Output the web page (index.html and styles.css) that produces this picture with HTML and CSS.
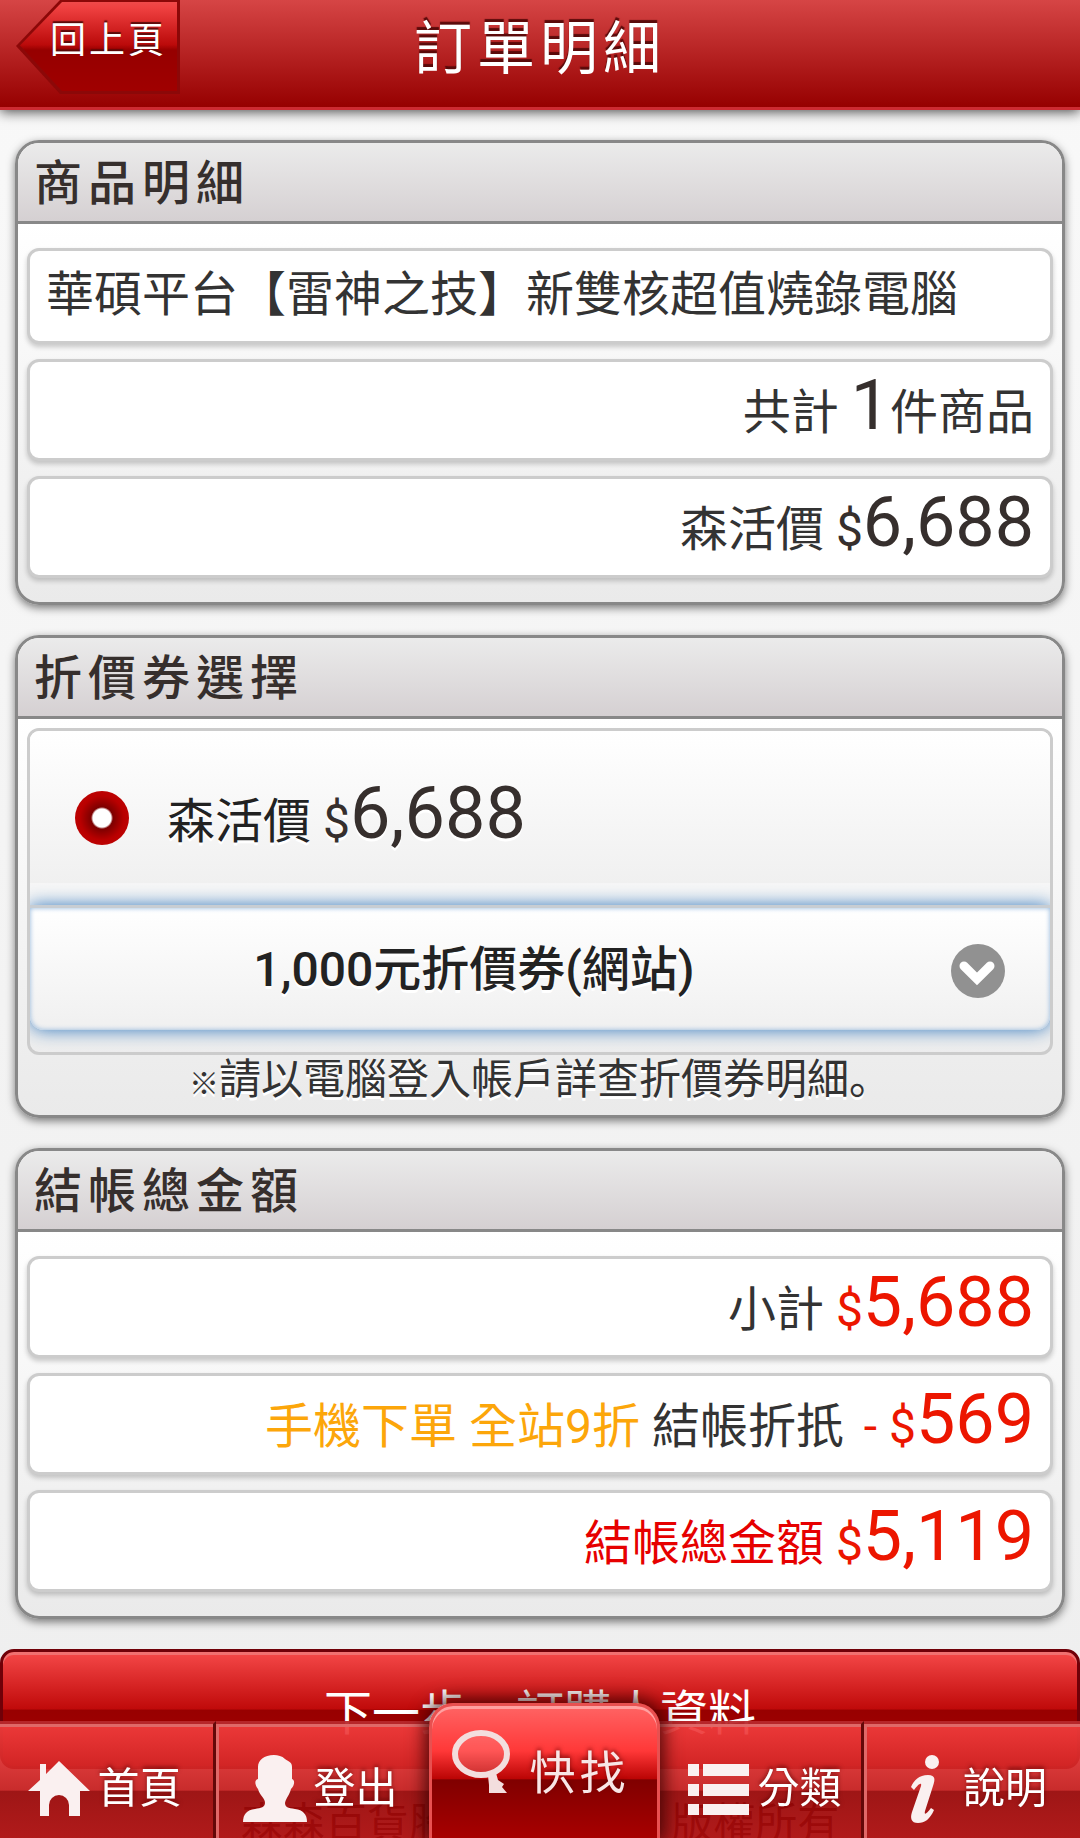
FILE: index.html
```html
<!DOCTYPE html>
<html lang="zh-Hant">
  <head>
    <meta charset="UTF-8" />
    <meta name="viewport" content="width=device-width, initial-scale=1.0" />
    <title>訂單明細</title>
    <link rel="stylesheet" href="styles.css">
  </head>
  <body>
    <div class="page">
      <header class="header">
        <a class="back" href="#"><span>回上頁</span></a>
        <h1>訂單明細</h1>
      </header>

      <main class="content">
        <section class="panel">
          <h2>商品明細</h2>
          <ul class="rows">
            <li class="row row-name">華碩平台【雷神之技】新雙核超值燒錄電腦</li>
            <li class="row">共計 <span class="num">1</span>件商品</li>
            <li class="row">森活價 <span class="price">$<span class="num">6,688</span></span></li>
          </ul>
        </section>

        <section class="panel">
          <h2>折價券選擇</h2>
          <div class="coupon">
            <label class="option" for="priceOption">
              <input type="radio" id="priceOption" name="coupon" checked>
              <span>森活價 <span class="price">$<span class="num">6,688</span></span></span>
            </label>
            <div class="select-wrap">
              <select id="couponSelect" aria-label="折價券">
                <option>1,000元折價券(網站)</option>
              </select>
              <svg class="chevron" viewBox="0 0 54 54">
                <circle cx="27" cy="27" r="27" fill="#919191"/>
                <path d="M13 22 L26 35 L39 22" fill="none" stroke="#fff" stroke-width="9" stroke-linecap="round"/>
              </svg>
            </div>
          </div>
          <p class="note"><span class="mark">※</span>請以電腦登入帳戶詳查折價券明細<span class="stop" lang="ja">。</span></p>
        </section>

        <section class="panel">
          <h2>結帳總金額</h2>
          <ul class="rows">
            <li class="row">小計 <span class="price red">$<span class="num">5,688</span></span></li>
            <li class="row"><span class="promo">手機下單 全站9折</span> 結帳折扺 <span class="price red discount">- $<span class="num">569</span></span></li>
            <li class="row"><span class="total">結帳總金額</span> <span class="price red">$<span class="num">5,119</span></span></li>
          </ul>
        </section>
      </main>

      <button type="button" class="next">下一步，訂購人資料</button>
      <footer class="footer">森森百貨股份有限公司 版權所有</footer>
    </div>

    <nav class="tabs">
      <a class="tab" href="#">
        <svg viewBox="0 0 64 68">
          <path d="M13 36 H1 L13 25 V9 H19 V19 L32 6 L63 36 H53 V61 H42 V50 A10 10 0 0 0 22 50 V61 H13 Z"/>
        </svg>
        <span>首頁</span>
      </a>
      <a class="tab" href="#">
        <svg viewBox="0 0 64 68">
          <path d="M31 0 C21 0 15 5 15 12 V24 C11 25 12 30 15 34 C17 41 22 43 22 48 C22 52 18 53 12 54 C4 55 0 59 0 67 H64 C64 59 60 55 52 54 C45 53 42 52 42 48 C43 43 46 41 48 34 C52 30 52 25 49 24 V12 C49 7 46 7 42 4 C39 1 35 0 31 0 Z"/>
        </svg>
        <span>登出</span>
      </a>
      <a class="tab tab-search" href="#">
        <svg viewBox="0 0 58 64">
          <ellipse cx="29" cy="24" rx="26" ry="21" fill="rgba(255,255,255,.15)" stroke="#f3dede" stroke-width="6"/>
          <path d="M36 46 L44 43 L46 50 L52 54 L50 57 L55 63 H37 V55 Z"/>
        </svg>
        <span>快找</span>
      </a>
      <a class="tab tab-list" href="#">
        <svg viewBox="0 0 64 68">
          <path d="M1 9h11v12H1zM16 9h46v12H16zM1 29h11v12H1zM16 29h46v12H16zM1 49h11v11H1zM16 49h46v11H16z"/>
        </svg>
        <span>分類</span>
      </a>
      <a class="tab" href="#">
        <svg viewBox="0 0 64 68">
          <circle cx="39" cy="7" r="7"/>
          <path d="M18 32 C21 25 26 20 35 20 C43 20 42 25 40 31 L32 56 C31 60 33 60 38 53 L41 55 C37 64 32 68 25 68 C18 68 17 63 19 57 L28 31 C29 27 26 28 21 35 Z"/>
        </svg>
        <span>說明</span>
      </a>
    </nav>
  </body>
</html>
```
FILE: styles.css
```css
* {
  margin: 0;
  padding: 0;
  box-sizing: border-box;
}

body {
  background: #f0f0f0;
  color: #333;
  font-family: Roboto, "Noto Sans CJK TC", sans-serif;
  font-size: 48px;
}

.page {
  height: 100vh;
  overflow-x: hidden;
  overflow-y: auto;
  scrollbar-width: none;
  background: linear-gradient(#f9f9f9, #eee);
}

a {
  color: #fff;
  text-decoration: none;
}

/* header */
.header {
  display: grid;
  grid-template-columns: 1fr auto 1fr;
  align-items: start;
  height: 110px;
  background: linear-gradient(#d64545, #960000);
  border-bottom: 3px solid #cd2b32;
  box-shadow: 0 2px 12px rgba(0, 0, 0, 0.7);
}

.header h1 {
  color: #fff;
  font-size: 58px;
  font-weight: 400;
  line-height: 98px;
  letter-spacing: 5px;
  text-shadow: 0 -3px 1px #5a0a0a;
}

.back {
  position: relative;
  display: block;
  width: 164px;
  height: 94px;
  margin-left: 16px;
  padding-left: 34px;
  background: #8c0808;
  clip-path: polygon(0 49%, 44px 0, 100% 0, 100% 100%, 44px 100%);
  font-size: 36px;
  line-height: 82px;
  letter-spacing: 3px;
  text-shadow: 0 -2px 1px #5a0a0a;
}

.back::before {
  content: "";
  position: absolute;
  inset: 2px 3px 3px 4px;
  background: linear-gradient(#f04a4a, #f04141 6%, #bb0a0a 48%, #960000 54%, #a00000);
  clip-path: polygon(0 49%, 42px 0, 100% 0, 100% 100%, 42px 100%);
}

.back span {
  position: relative;
}

/* panels */
.content {
  display: flex;
  flex-direction: column;
  gap: 30px;
  padding: 30px 15px;
}

.panel {
  border: 3px solid #888;
  border-radius: 24px;
  background: linear-gradient(#fff 80px, #eaeaea);
  box-shadow: 0 3px 8px rgba(0, 0, 0, 0.5);
  overflow: hidden;
}

.panel h2 {
  height: 81px;
  padding-left: 16px;
  border-bottom: 3px solid #888;
  background: linear-gradient(#ebebeb, #d5d0d2);
  color: #362f2d;
  font-size: 48px;
  font-weight: 500;
  line-height: 82px;
  letter-spacing: 6px;
}

.rows {
  display: flex;
  flex-direction: column;
  gap: 15px;
  padding: 24px 9px;
  list-style: none;
}

.row {
  height: 102px;
  padding: 0 16px;
  border: 3px solid #ccc;
  border-radius: 12px;
  background: #fff;
  box-shadow: 0 3px 5px rgba(0, 0, 0, 0.2);
  line-height: 86px;
  text-align: right;
}

.row-name {
  height: 96px;
  line-height: 88px;
  text-align: left;
}

.num {
  font-size: 70px;
}

.price,
.num {
  color: #362f2d;
}

.red,
.red .num {
  color: #ec1600;
}

.discount {
  margin-left: 8px;
}

.promo {
  color: #fca60a;
}

.total {
  color: #e60000;
}

/* coupon picker */
.coupon {
  margin: 9px 9px 0;
  border: 3px solid #ccc;
  border-radius: 12px;
  overflow: hidden;
}

.option {
  display: flex;
  align-items: center;
  gap: 38px;
  height: 152px;
  padding: 22px 45px 0;
  background: linear-gradient(#fff, #f0f0f0);
  color: #222;
  line-height: 90px;
  text-shadow: 0 3px 0 #fff;
}

.option .num {
  font-size: 72px;
}

.option input {
  appearance: none;
  width: 54px;
  height: 54px;
  border-radius: 50%;
  background: radial-gradient(circle, #fff 9px, #7d0000 11px, #b90000 22px, #c40808);
}

.select-wrap {
  position: relative;
  margin: 22px 0;
}

.select-wrap select {
  display: block;
  appearance: none;
  width: 100%;
  height: 125px;
  padding-right: 132px;
  border: 0;
  border-top: 3px solid #c8cdd2;
  border-radius: 0 0 14px 14px;
  background: linear-gradient(#fff, #f0f0f0);
  box-shadow: inset 0 0 5px #8fb5dc, 0 0 18px #387bbe;
  color: #222;
  font-family: inherit;
  font-size: 48px;
  font-weight: 500;
  text-align: center;
  text-align-last: center;
  text-shadow: 0 3px 0 #fff;
}

.chevron {
  position: absolute;
  top: 39px;
  right: 45px;
  width: 54px;
  height: 54px;
  pointer-events: none;
}

.note {
  height: 60px;
  font-size: 42px;
  line-height: 50px;
  text-align: center;
  text-shadow: 0 3px 0 #fff;
}

.mark {
  font-size: 30px;
}

/* bottom of the page */
.next {
  display: block;
  width: 100%;
  height: 120px;
  border: 3px solid #700008;
  border-radius: 14px;
  background: linear-gradient(#f54848, #c00a0a 50%, #980000 51%, #a80000);
  box-shadow: inset 0 3px 0 #f07070;
  color: #fff;
  font-family: inherit;
  font-size: 48px;
}

.footer {
  padding: 30px 0 120px;
  font-size: 42px;
  line-height: 50px;
  text-align: center;
}

/* tab bar */
.tabs {
  position: fixed;
  right: 0;
  bottom: 0;
  left: 0;
  display: flex;
  align-items: flex-end;
}

.tab {
  flex: none;
  display: flex;
  align-items: center;
  justify-content: center;
  gap: 6px;
  width: 20%;
  height: 117px;
  padding: 16px 4px 0 0;
  border-top: 3px solid rgba(184, 40, 44, 0.95);
  border-right: 3px solid #640808;
  background: linear-gradient(rgba(243, 62, 62, 0.92), rgba(197, 27, 27, 0.92) 58%, rgba(151, 3, 3, 0.92) 59%, rgba(171, 8, 8, 0.92));
  background-clip: padding-box;
  box-shadow: inset 3px 3px 0 #e06868;
  font-size: 42px;
  line-height: 48px;
  text-shadow: 0 -2px 4px rgba(90, 0, 0, 0.7);
}

.tab:first-child {
  box-shadow: inset 0 3px 0 #e06868;
}

.tab:last-child {
  border-right: 0;
}

.tab svg {
  flex: none;
  width: 64px;
  height: 68px;
  fill: #faf0f0;
}

.tab-list {
  padding: 16px 0 0 20px;
}

/* raised middle tab, wider than its share by the two margins */
.tab-search {
  z-index: 1;
  gap: 20px;
  width: calc(20% + 15px);
  height: 135px;
  margin: 0 -12px 0 -3px;
  padding: 2px 8px 0 0;
  border: 3px solid #e85050;
  border-bottom: 0;
  border-radius: 24px 24px 0 0;
  background: linear-gradient(#ff6464, #ff3838 34%, #bb0505 55%, #800000 56%, #a80000);
  box-shadow: inset 0 3px 0 #ffa0a0, 0 0 18px 4px rgba(50, 0, 0, 0.85);
  color: #f8e6e6;
  font-size: 46px;
  letter-spacing: 4px;
}

.tab-search svg {
  width: 58px;
  height: 64px;
  margin-bottom: 22px;
  fill: #f3dede;
}
```
